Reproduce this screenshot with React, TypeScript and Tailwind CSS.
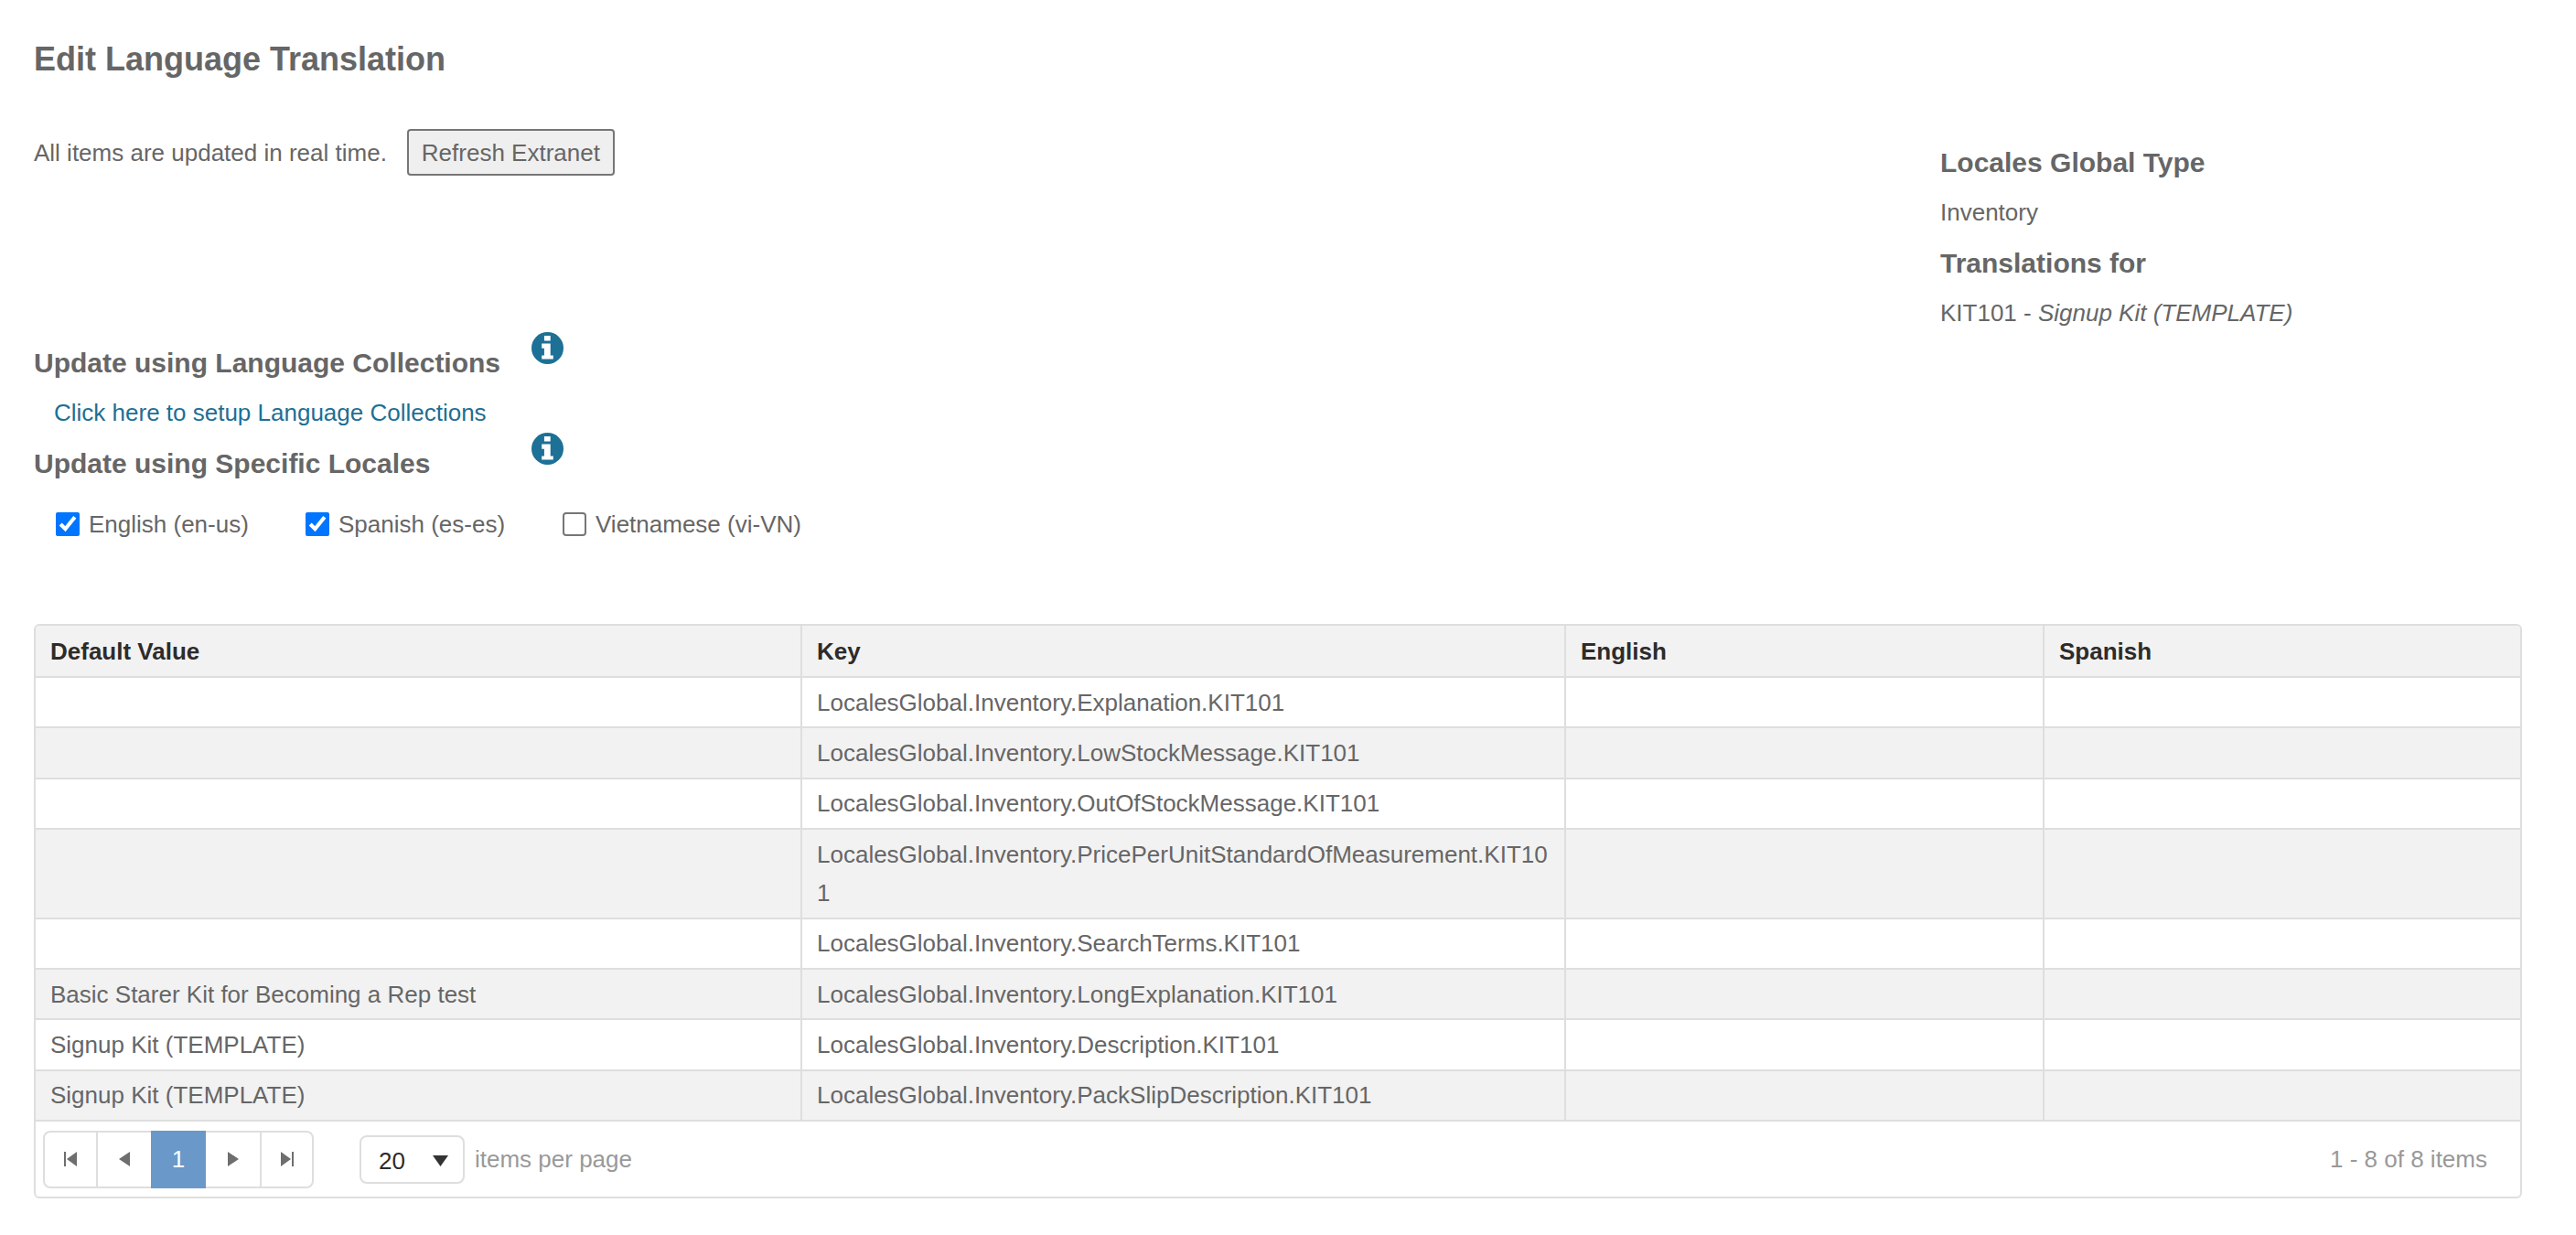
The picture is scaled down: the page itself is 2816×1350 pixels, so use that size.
import React from 'react';

const rows = [
    {value: '', key: 'LocalesGlobal.Inventory.Explanation.KIT101'},
    {value: '', key: 'LocalesGlobal.Inventory.LowStockMessage.KIT101'},
    {value: '', key: 'LocalesGlobal.Inventory.OutOfStockMessage.KIT101'},
    {value: '', key: 'LocalesGlobal.Inventory.PricePerUnitStandardOfMeasurement.KIT101'},
    {value: '', key: 'LocalesGlobal.Inventory.SearchTerms.KIT101'},
    {value: 'Basic Starer Kit for Becoming a Rep test', key: 'LocalesGlobal.Inventory.LongExplanation.KIT101'},
    {value: 'Signup Kit (TEMPLATE)', key: 'LocalesGlobal.Inventory.Description.KIT101'},
    {value: 'Signup Kit (TEMPLATE)', key: 'LocalesGlobal.Inventory.PackSlipDescription.KIT101'},
];

const locales = [
    {label: 'English (en-us)', checked: true, width: 'w-[273px]'},
    {label: 'Spanish (es-es)', checked: true, width: 'w-[281px]'},
    {label: 'Vietnamese (vi-VN)', checked: false, width: ''},
];

const headCell = 'h-[57px] border-b-2 border-[#dedede] px-[16px] text-left font-bold text-[#2e2b2b]';

const InfoIcon = () => (
    <svg width="35" height="35" viewBox="0 0 103 103" className="shrink-0">
        <circle cx="51.5" cy="51.5" r="51.5" fill="#1d7096"/>
        <path fill="#ffffff" d="M41 12h20v16H41zM33 37h28v38h9v12H33V75h8V52h-8z"/>
    </svg>
);

const PagerIcon = ({d}: {d: string}) => (
    <svg width="14" height="16" viewBox="0 0 14 16" fill="#6e6e6e"><path d={d}/></svg>
);

const App = () => {
    return (
        <div className="min-h-[1350px] bg-white px-[37px] pt-[46px] font-['Liberation_Sans',Arial,sans-serif] text-[26px] leading-[38px] text-[#666666]">
            <div className="flex">
                <div className="w-[2084px]">
                    <h1 className="text-[36px] leading-[38px] font-bold">Edit Language Translation</h1>
                    <div className="mt-[57px] flex h-[51px] items-center">
                        <span>All items are updated in real time.</span>
                        <button className="ml-[22px] h-[51px] w-[227px] rounded-[4px] border-2 border-[#767676] bg-[#efefef]">Refresh Extranet</button>
                    </div>
                    <div className="mt-[171px] flex h-[35px] items-start">
                        <h3 className="mt-[16px] w-[544px] text-[30px] leading-[36px] font-bold">Update using Language Collections</h3>
                        <InfoIcon/>
                    </div>
                    <a className="mt-[34px] ml-[22px] block text-[#1d6f94]">Click here to setup Language Collections</a>
                    <div className="mt-[3px] flex h-[35px] items-start">
                        <h3 className="mt-[16px] w-[544px] text-[30px] leading-[36px] font-bold">Update using Specific Locales</h3>
                        <InfoIcon/>
                    </div>
                    <div className="mt-[46px] ml-[24px] flex items-center">
                        {locales.map((l) => (
                            <label key={l.label} className={`flex items-center gap-[10px] ${l.width}`}>
                                {l.checked
                                    ? <input type="checkbox" defaultChecked className="h-[26px] w-[26px] accent-[#0075ff]"/>
                                    : <input type="checkbox" className="h-[26px] w-[26px] appearance-none rounded-[4px] border-2 border-[#767676] bg-white"/>}
                                <span>{l.label}</span>
                            </label>
                        ))}
                    </div>
                </div>
                <div className="pt-[113px]">
                    <h3 className="text-[30px] leading-[38px] font-bold">Locales Global Type</h3>
                    <p className="mt-[16px]">Inventory</p>
                    <h3 className="mt-[18px] text-[30px] leading-[38px] font-bold">Translations for</h3>
                    <p className="mt-[16px]">KIT101 - <em>Signup Kit (TEMPLATE)</em></p>
                </div>
            </div>

            <div className="mt-[90px] w-[2720px] overflow-hidden rounded-[6px] border-2 border-[#dedede]">
                <table className="w-full table-fixed border-separate border-spacing-0 leading-[42px]">
                    <colgroup>
                        <col className="w-[838px]"/>
                        <col className="w-[835px]"/>
                        <col className="w-[523px]"/>
                        <col/>
                    </colgroup>
                    <thead className="bg-[#f2f2f2]">
                        <tr>
                            <th className={`${headCell} border-r-2`}>Default Value</th>
                            <th className={`${headCell} border-r-2`}>Key</th>
                            <th className={`${headCell} border-r-2`}>English</th>
                            <th className={headCell}>Spanish</th>
                        </tr>
                    </thead>
                    <tbody>
                        {rows.map((row, index) => (
                            <tr key={row.key} className={index % 2 === 1 ? 'bg-[#f2f2f2]' : 'bg-white'}>
                                <td className="border-r-2 border-b-2 border-[#dedede] px-[16px] py-[5.7px]">{row.value}</td>
                                <td className="border-r-2 border-b-2 border-[#dedede] px-[16px] py-[5.7px] break-all">{row.key}</td>
                                <td className="border-r-2 border-b-2 border-[#dedede] px-[16px] py-[5.7px]"></td>
                                <td className="border-b-2 border-[#dedede] px-[16px] py-[5.7px]"></td>
                            </tr>
                        ))}
                    </tbody>
                </table>
                <div className="flex h-[82px] items-center pr-[36px] pl-[8px] text-[#999999]">
                    <div className="flex h-[63px] w-[296px] rounded-[8px] border-2 border-[#dedede]">
                        <div className="flex w-[58px] items-center justify-center border-r-2 border-[#dedede]">
                            <PagerIcon d="M0 0h2v16H0zM14 0v16L3 8z"/>
                        </div>
                        <div className="flex w-[58px] items-center justify-center">
                            <PagerIcon d="M13 0v16L1 8z"/>
                        </div>
                        <div className="-my-[2px] flex w-[60px] items-center justify-center bg-[#6a98c9] text-white">1</div>
                        <div className="flex w-[61px] items-center justify-center border-r-2 border-[#dedede]">
                            <PagerIcon d="M1 0v16l12-8z"/>
                        </div>
                        <div className="flex flex-1 items-center justify-center">
                            <PagerIcon d="M14 0h-2v16h2zM0 0v16l11-8z"/>
                        </div>
                    </div>
                    <div className="ml-[50px] flex h-[53px] w-[115px] items-center justify-between rounded-[8px] border-2 border-[#dedede] pt-[4px] pr-[16px] pl-[19px] text-[#2b2b2b]">
                        <span>20</span>
                        <svg width="17" height="12" viewBox="0 0 17 12" fill="#333333"><path d="M0 0h17L8.5 12z"/></svg>
                    </div>
                    <span className="ml-[11px]">items per page</span>
                    <span className="ml-auto">1 - 8 of 8 items</span>
                </div>
            </div>
        </div>
    );
}

export default App;
